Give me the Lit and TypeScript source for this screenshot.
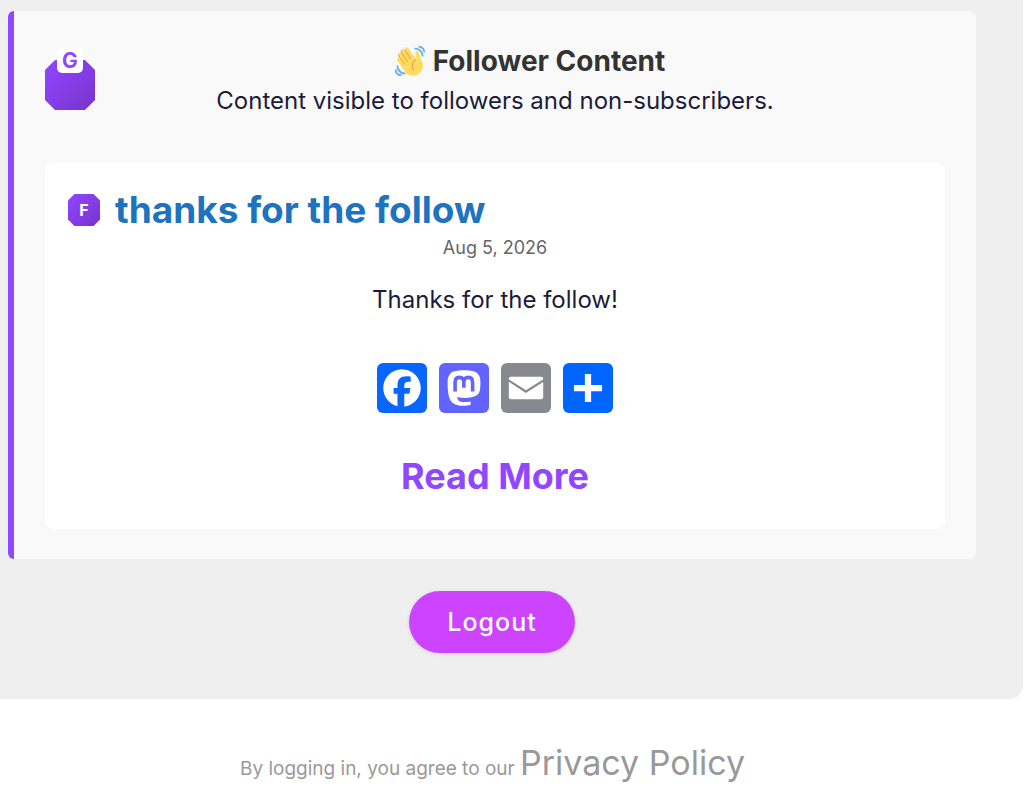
import { LitElement, html, css, svg } from "lit";
import { customElement } from "lit/decorators.js";

const wave = html`<svg class="wave" viewBox="0 0 36 36" aria-hidden="true">
  <path fill="#EF9645" d="M4.861 9.147c.94-.657 2.357-.531 3.201.166l-.968-1.407c-.779-1.111-.5-2.313.612-3.093 1.112-.777 4.263 1.312 4.263 1.312-.786-1.122-.639-2.544.483-3.331 1.122-.784 2.67-.513 3.456.611l10.42 14.72L25 31l-11.083-4.042L4.25 12.625c-.793-1.129-.519-2.686.611-3.478z"/>
  <path fill="#FFDC5D" d="M2.695 17.336s-1.132-1.65.519-2.781c1.649-1.131 2.78.518 2.78.518l5.251 7.658c.181-.302.379-.6.6-.894L4.557 11.21s-1.131-1.649.519-2.78c1.649-1.131 2.78.518 2.78.518l6.855 9.997c.255-.208.516-.417.785-.622L7.549 6.732s-1.131-1.649.519-2.78c1.649-1.131 2.78.518 2.78.518l7.947 11.589c.292-.179.581-.334.871-.498L12.238 4.729s-1.131-1.649.518-2.78c1.649-1.131 2.78.518 2.78.518l7.854 11.454 1.194 1.742c-4.948 3.394-5.419 9.779-2.592 13.902.565.825 1.39.26 1.39.26-3.393-4.949-2.357-10.51 2.592-13.903L24.515 8.62s-.545-1.924 1.378-2.47c1.924-.545 2.47 1.379 2.47 1.379l1.685 5.004c.668 1.984 1.379 3.961 2.32 5.831 2.657 5.28 1.07 11.842-3.94 15.279-5.465 3.747-12.936 2.354-16.684-3.11L2.695 17.336z"/>
  <path fill="#5DADEC" d="M12 32.042C8 32.042 3.958 28 3.958 24c0-.553-.405-1-.958-1s-1.042.447-1.042 1C1.958 30 6 34.042 12 34.042c.553 0 1-.489 1-1.042s-.447-.958-1-.958z"/>
  <path fill="#5DADEC" d="M7 34c-3 0-5-2-5-5 0-.553-.447-1-1-1s-1 .447-1 1c0 4 3 7 7 7 .553 0 1-.447 1-1s-.447-1-1-1zM24 2c-.552 0-1 .448-1 1s.448 1 1 1c4 0 8 3.589 8 8 0 .552.448 1 1 1s1-.448 1-1c0-5.514-4-10-10-10z"/>
  <path fill="#5DADEC" d="M29 .042c-.552 0-1 .406-1 .958s.448 1.042 1 1.042c3 0 4.958 2.225 4.958 4.958 0 .552.489 1 1.042 1s.958-.448.958-1C35.958 3.163 33 .042 29 .042z"/>
</svg>`;

const shares = [
  { name: "Facebook", color: "facebook", glyph: svg`<path fill="#fff" d="M28 16c0-6.627-5.373-12-12-12S4 9.373 4 16c0 5.628 3.875 10.35 9.101 11.647v-7.98h-2.474V16H13.1v-1.58c0-4.085 1.849-5.978 5.859-5.978.76 0 2.072.15 2.608.298v3.325c-.283-.03-.775-.045-1.386-.045-1.967 0-2.728.745-2.728 2.683V16h3.92l-.673 3.667h-3.247v8.245C23.395 27.195 28 22.135 28 16"/>` },
  { name: "Mastodon", color: "mastodon", glyph: svg`
    <path fill="#fff" d="M16 4.6c4.6 0 7.4.7 8.7 2.1 1.3 1.3 1.8 3 1.8 5.300 0 2.700-.1 4.700-.6 6.400-.8 2.200-3.200 3.300-6 3.700-3 .4-5.500.3-8.200-.4.1 2.500 1.600 3.200 4.200 3.300 1.600.1 3-.1 4.300-.4l.1 1.900c-1.400.7-3 .9-4.700.9-5.200 0-8.300-2-9.300-6.200-.7-2.900-.8-6.100-.8-9.200 0-2.300.6-4 1.800-5.300C8.600 5.300 11.500 4.600 16 4.600z"/>
    <path fill="none" stroke="#6364ff" stroke-width="2.300" d="M10.300 18.200v-5.800c0-2 1-3.200 2.700-3.200 1.900 0 2.900 1.300 2.900 3.300v3.300v-3.300c0-2 1-3.300 2.900-3.300 1.700 0 2.700 1.200 2.700 3.200v5.800"/>` },
  { name: "Email", color: "email", glyph: svg`<path fill="#fff" d="M27 21.775v-9.665s0 0-.016.01L16.39 18.87a.9.9 0 0 1-.98-.02L5 11.98v9.815c0 .905.495 1.375 1.4 1.375h19.2c.905 0 1.4-.49 1.4-1.395"/><path fill="#fff" d="m15.95 17.5 10.91-6.95c.09-.13.14-.28.14-.44 0-.75-.48-1.25-1.4-1.25H6.4C5.48 8.86 5 9.34 5 10.09c0 .17.05.34.14.47z"/>` },
  { name: "Share", color: "more", glyph: svg`<path fill="#fff" d="M14 7h4v18h-4z"/><path fill="#fff" d="M7 14h18v4H7z"/>` },
];

@customElement("app-root")
export class AppRoot extends LitElement {
  static styles = css`
    :host {
      display: block;
      font-family: Inter, sans-serif;
      font-size: 24px;
      line-height: 40px;
      color: #1c1c3a;
      text-align: center;
      background: #fff;
    }
    a { color: inherit; text-decoration: none; }
    h2, h3, p { margin: 0; }
    .panel {
      margin-right: 1px;
      padding: 11px 47px 46px 8px;
      background: #efefef;
      border-radius: 0 0 14px 0;
    }
    .card {
      padding: 30px 31px;
      background: #f9f9f9;
      border-left: 6px solid #9147ff;
      border-radius: 6px;
    }
    .intro {
      display: grid;
      grid-template-columns: 50px 1fr;
      column-gap: 20px;
      margin-bottom: 42px;
    }
    .octagon {
      background: linear-gradient(135deg, #9147ff, #7733cc);
      clip-path: polygon(20% 0, 80% 0, 100% 20%, 100% 80%, 80% 100%, 20% 100%, 0 80%, 0 20%);
    }
    .emblem {
      position: relative;
      grid-area: 1 / 1 / 3 / 2;
      margin-top: 19px;
      width: 50px;
      height: 50px;
    }
    .emblem .octagon { height: 100%; }
    .chip {
      position: absolute;
      top: -12px;
      left: 12px;
      width: 26px;
      height: 25px;
      border-radius: 5px;
      background: #fff;
      color: #9147ff;
      font-size: 21px;
      line-height: 26px;
      font-weight: 700;
    }
    .title {
      grid-area: 1 / 2;
      display: flex;
      align-items: center;
      justify-content: center;
      gap: 8px;
      font-size: 28px;
      font-weight: 700;
      color: #333;
    }
    .wave { width: 30px; height: 30px; }
    .lead { grid-area: 2 / 1 / 3 / 3; }
    .post {
      padding: 24px 23px 28px;
      background: #fff;
      border-radius: 8px;
    }
    .heading {
      display: flex;
      align-items: center;
      gap: 15px;
      height: 46px;
    }
    .badge {
      width: 32px;
      height: 32px;
      font-size: 16px;
      line-height: 32px;
      font-weight: 700;
      color: #fff;
    }
    .heading h3 { font-size: 37px; font-weight: 700; color: #1e73be; }
    .date {
      display: block;
      font-size: 18px;
      line-height: 30px;
      color: #666;
    }
    .body { margin-top: 17px; }
    .shares {
      display: flex;
      justify-content: center;
      gap: 12px;
      margin: 43px 0 40px;
    }
    .share {
      width: 50px;
      height: 50px;
      border-radius: 6px;
      overflow: hidden;
    }
    .share svg { display: block; }
    .facebook { background: #0866ff; }
    .mastodon { background: #6364ff; }
    .email { background: #888990; }
    .more { background: #0166ff; }
    .read {
      display: inline-block;
      font-size: 36px;
      line-height: 46px;
      font-weight: 700;
      color: #9147ff;
    }
    .logout {
      display: block;
      margin: 32px auto 0;
      padding: 11px 38px;
      border: 0;
      border-radius: 32px;
      background: #cc44ff;
      box-shadow: 0 1px 4px rgb(0 0 0 / 12%);
      color: #fff;
      font: 500 25px/40px Inter, sans-serif;
      letter-spacing: 1px;
    }
    .legal {
      padding: 40px 47px 20px 8px;
      font-size: 19px;
      line-height: 48px;
      color: #999;
    }
    .legal a { font-size: 34px; }
  `;

  render() {
    return html`
      <main class="panel">
        <section class="card">
          <header class="intro">
            <div class="emblem"><div class="octagon"></div><span class="chip">G</span></div>
            <h2 class="title">${wave}<span>Follower Content</span></h2>
            <p class="lead">Content visible to followers and non-subscribers.</p>
          </header>
          <article class="post">
            <div class="heading">
              <span class="badge octagon">F</span>
              <h3><a href="#post">thanks for the follow</a></h3>
            </div>
            <time class="date" datetime="2026-08-05">Aug 5, 2026</time>
            <p class="body">Thanks for the follow!</p>
            <div class="shares">
              ${shares.map((s) => html`<a class="share ${s.color}" href="#share" aria-label=${s.name}>
                <svg viewBox="0 0 32 32" width="50" height="50" aria-hidden="true">${s.glyph}</svg>
              </a>`)}
            </div>
            <a class="read" href="#post">Read More</a>
          </article>
        </section>
        <button class="logout" type="button">Logout</button>
      </main>
      <footer class="legal">By logging in, you agree to our <a href="#privacy">Privacy Policy</a></footer>
    `;
  }
}
